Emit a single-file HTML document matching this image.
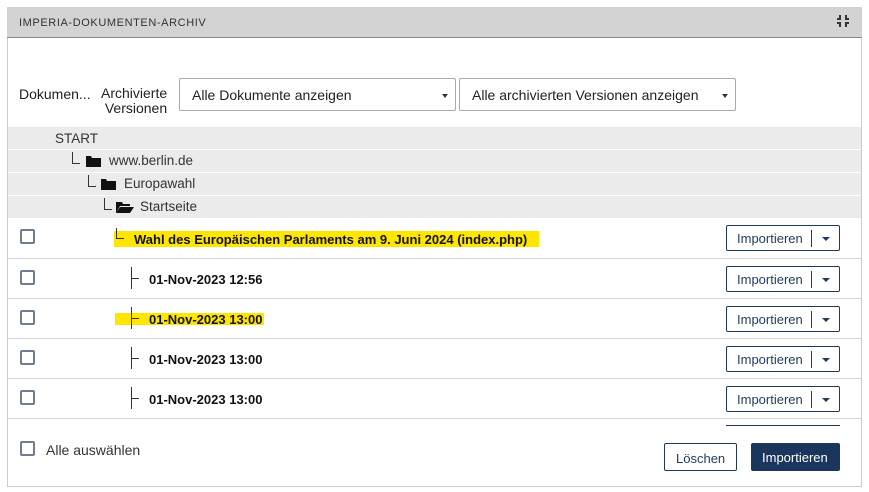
<!DOCTYPE html>
<html><head><meta charset="utf-8"><style>
*{box-sizing:border-box;margin:0;padding:0}
body{width:869px;height:492px;background:#fff;font-family:"Liberation Sans",Arial,sans-serif;color:#222;position:relative;overflow:hidden}
.a{position:absolute}
.panel{left:7px;top:7px;width:855px;height:480px;border:1px solid #ccc;border-top:none}
.hdr{left:7px;top:7px;width:855px;height:31px;background:#d3d3d3;border-bottom:1px solid #8a8a8a;font-size:11px;letter-spacing:.6px;color:#333;padding:10px 0 0 12px}
.sel{height:33px;border:1px solid #aaa;border-radius:2px;font-size:14px;padding:8px 0 0 12px;color:#222}
.sel:after{content:"";position:absolute;right:7px;top:15px;border-left:3.5px solid transparent;border-right:3.5px solid transparent;border-top:4px solid #333}
.tr{left:8px;width:853px;height:22px;background:#ebebeb;font-size:13.5px;color:#333}
.row{left:8px;width:853px;height:40px;border-bottom:1.5px solid #d6d6d6}
.cb{width:15px;height:15px;border:2px solid #6f7d93;border-radius:2px;left:12px}
.t{font-weight:bold;font-size:13px;color:#111}
.hl{background:#ffe600}
.btn{left:718px;width:114px;height:26px;border:1px solid #1f3a5f;border-radius:2px;font-size:13px;color:#1f3a5f}
.btn span{position:absolute;left:10px;top:5px}
.btn i{position:absolute;left:84px;top:4px;width:1px;height:17px;background:#1f3a5f}
.btn b{position:absolute;left:95px;top:11px;border-left:4px solid transparent;border-right:4px solid transparent;border-top:4px solid #1f3a5f}
.vl{width:1px;height:22px;background:#333}
.hz{width:8px;height:1px;background:#333}
</style></head><body>
<div class="a panel"></div>
<div class="a hdr">IMPERIA-DOKUMENTEN-ARCHIV</div>
<svg class="a" style="left:836px;top:14px" width="14" height="14" viewBox="0 0 14 14"><path d="M4 1v4H1M10 1v4h3M4 13v-4H1M10 13v-4h3" stroke="#333" stroke-width="2" fill="none"/></svg>
<div class="a" style="left:19px;top:86px;font-size:14px">Dokumen...</div>
<div class="a" style="left:101px;top:86px;font-size:14px;text-align:right;line-height:15px">Archivierte<br>Versionen</div>
<div class="a sel" style="left:179px;top:78px;width:277px">Alle Dokumente anzeigen</div>
<div class="a sel" style="left:459px;top:78px;width:277px">Alle archivierten Versionen anzeigen</div>

<div class="a tr" style="top:127px"><span class="a" style="left:47px;top:4px">START</span></div>
<div class="a tr" style="top:150px"><div class="a" style="left:64px;top:2px;width:1px;height:11px;background:#333"></div><div class="a hz" style="left:64px;top:13px"></div><svg class="a" style="left:78px;top:5px" width="15" height="12" viewBox="0 0 15 12"><path d="M0 1h5l1 2h9v9H0z" fill="#111"/></svg><span class="a" style="left:101px;top:3px">www.berlin.de</span></div>
<div class="a tr" style="top:173px"><div class="a" style="left:80px;top:2px;width:1px;height:11px;background:#333"></div><div class="a hz" style="left:80px;top:13px"></div><svg class="a" style="left:93px;top:5px" width="15" height="12" viewBox="0 0 15 12"><path d="M0 1h5l1 2h9v9H0z" fill="#111"/></svg><span class="a" style="left:116px;top:3px">Europawahl</span></div>
<div class="a tr" style="top:196px;height:22px"><div class="a" style="left:96px;top:2px;width:1px;height:11px;background:#333"></div><div class="a hz" style="left:96px;top:13px"></div><svg class="a" style="left:108px;top:6px" width="18" height="11" viewBox="0 0 18 11"><path d="M0 0h6l1 2h7v2H4L0 11z M4 5h14l-4 6H0z" fill="#111"/></svg><span class="a" style="left:132px;top:3px">Startseite</span></div>

<div class="a row" style="top:218px;height:41px"><div class="a cb" style="top:11px"></div><div class="a hl" style="left:106px;top:13px;width:425px;height:16px"></div><div class="a" style="left:108px;top:10px;width:1px;height:10px;background:#333"></div><div class="a hz" style="left:108px;top:20px"></div><span class="a t" style="left:126px;top:14px">Wahl des Europäischen Parlaments am 9. Juni 2024 (index.php)</span><div class="a btn" style="top:7px"><span>Importieren</span><i></i><b></b></div></div>
<div class="a row" style="top:259px"><div class="a cb" style="top:11px"></div><div class="a vl" style="left:123px;top:8px"></div><div class="a hz" style="left:123px;top:19px"></div><span class="a t" style="left:141px;top:13px">01-Nov-2023 12:56</span><div class="a btn" style="top:7px"><span>Importieren</span><i></i><b></b></div></div>
<div class="a row" style="top:299px"><div class="a cb" style="top:11px"></div><div class="a hl" style="left:107px;top:14px;width:149px;height:12px"></div><div class="a vl" style="left:123px;top:8px"></div><div class="a hz" style="left:123px;top:19px"></div><span class="a t" style="left:141px;top:13px">01-Nov-2023 13:00</span><div class="a btn" style="top:7px"><span>Importieren</span><i></i><b></b></div></div>
<div class="a row" style="top:339px"><div class="a cb" style="top:11px"></div><div class="a vl" style="left:123px;top:8px"></div><div class="a hz" style="left:123px;top:19px"></div><span class="a t" style="left:141px;top:13px">01-Nov-2023 13:00</span><div class="a btn" style="top:7px"><span>Importieren</span><i></i><b></b></div></div>
<div class="a row" style="top:379px"><div class="a cb" style="top:11px"></div><div class="a vl" style="left:123px;top:8px"></div><div class="a hz" style="left:123px;top:19px"></div><span class="a t" style="left:141px;top:13px">01-Nov-2023 13:00</span><div class="a btn" style="top:7px"><span>Importieren</span><i></i><b></b></div></div>
<div class="a" style="left:726px;top:425px;width:114px;height:2px;border-top:1px solid #1f3a5f"></div>

<div class="a cb" style="left:20px;top:441px"></div>
<div class="a" style="left:46px;top:442px;font-size:14px;color:#333">Alle auswählen</div>
<div class="a" style="left:664px;top:443px;width:73px;height:28px;border:1px solid #1f3a5f;border-radius:2px;font-size:13px;color:#1f3a5f;padding:7px 0 0 11px">Löschen</div>
<div class="a" style="left:751px;top:443px;width:89px;height:28px;background:#1b365d;border-radius:2px;font-size:13px;color:#fff;padding:7px 0 0 11px">Importieren</div>
</body></html>
